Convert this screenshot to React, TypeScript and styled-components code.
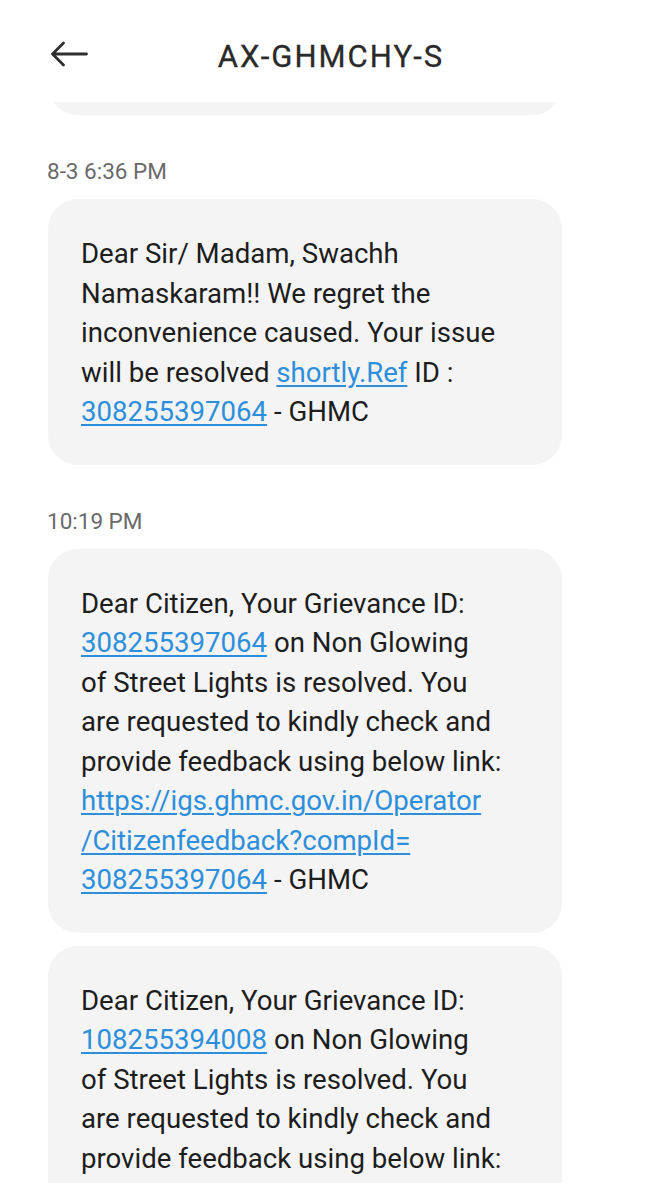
import React from "react";
import styled, { createGlobalStyle } from "styled-components";

type Segment = { text: string; link?: boolean };
type Line = Segment[];

interface Message {
  id: string;
  time?: string;
  lines: Line[];
}

const t = (text: string): Segment => ({ text });
const l = (text: string): Segment => ({ text, link: true });

const messages: Message[] = [
  {
    id: "m1",
    time: "8-3 6:36 PM",
    lines: [
      [t("Dear Sir/ Madam, Swachh")],
      [t("Namaskaram!! We regret the")],
      [t("inconvenience caused. Your issue")],
      [t("will be resolved "), l("shortly.Ref"), t(" ID :")],
      [l("308255397064"), t(" - GHMC")],
    ],
  },
  {
    id: "m2",
    time: "10:19 PM",
    lines: [
      [t("Dear Citizen, Your Grievance ID:")],
      [l("308255397064"), t(" on Non Glowing")],
      [t("of Street Lights is resolved. You")],
      [t("are requested to kindly check and")],
      [t("provide feedback using below link:")],
      [l("https://igs.ghmc.gov.in/Operator")],
      [l("/Citizenfeedback?compId=")],
      [l("308255397064"), t(" - GHMC")],
    ],
  },
  {
    id: "m3",
    lines: [
      [t("Dear Citizen, Your Grievance ID:")],
      [l("108255394008"), t(" on Non Glowing")],
      [t("of Street Lights is resolved. You")],
      [t("are requested to kindly check and")],
      [t("provide feedback using below link:")],
      [l("https://igs.ghmc.gov.in/Operator")],
      [l("/Citizenfeedback?compId=")],
      [l("108255394008"), t(" - GHMC")],
    ],
  },
];

const GlobalStyle = createGlobalStyle`
  html, body {
    margin: 0;
    padding: 0;
    background: #ffffff;
  }
  body {
    font-family: Roboto, "Noto Sans", "Liberation Sans", sans-serif;
    -webkit-font-smoothing: antialiased;
  }
`;

const Screen = styled.div`
  width: 662px;
  height: 1200px;
  background: #ffffff;
  display: flex;
  flex-direction: column;
  overflow: hidden;
`;

const Header = styled.header`
  height: 102px;
  flex-shrink: 0;
  display: grid;
  grid-template-columns: 120px 1fr 120px;
  align-items: center;
  padding-top: 10px;
  box-sizing: border-box;
`;

const BackButton = styled.button`
  border: none;
  background: none;
  padding: 0 0 0 50px;
  margin: 0 0 5px;
  display: flex;
  align-items: center;
  cursor: pointer;
  justify-self: start;
`;

const Title = styled.h1`
  margin: 0;
  text-align: center;
  font-size: 31px;
  font-weight: 400;
  color: #2a2a2a;
  letter-spacing: 2px;
  -webkit-text-stroke: 0.3px #2a2a2a;
`;

const Thread = styled.main`
  flex: 0 0 1081px;
  overflow: hidden;
  display: flex;
  flex-direction: column;
  padding: 0 100px 0 48px;
`;

const Bubble = styled.div`
  flex-shrink: 0;
  width: 514px;
  box-sizing: border-box;
  background: #f4f4f4;
  border-radius: 30px;
  padding: 35px 20px 33px 33px;
  font-size: 27.6px;
  line-height: 39.5px;
  color: #1d1d1d;

  & + & {
    margin-top: 13px;
  }
`;

/* the earlier message, scrolled mostly out of view under the header */
const EarlierBubble = styled(Bubble)`
  height: 120px;
  margin-top: -107px;
`;

const TimeLabel = styled.div`
  margin: 43px 0 15px -1px;
  font-size: 22.5px;
  line-height: 26px;
  color: #6a6a6a;
`;

const TextLine = styled.div`
  white-space: nowrap;
`;

const Link = styled.a`
  color: #2d8fdb;
  text-decoration: underline;
  text-decoration-thickness: 1.5px;
  text-underline-offset: 3px;
`;

const BackArrow = () => (
  <svg width="38" height="26" viewBox="0 0 38 26" fill="none">
    <path
      d="M36.5 13H3M13.5 2L2.5 13L13.5 24"
      stroke="#2e2e2e"
      strokeWidth="2.8"
      strokeLinecap="round"
      strokeLinejoin="round"
    />
  </svg>
);

function MessageBubble({ lines }: { lines: Line[] }) {
  return (
    <Bubble>
      {lines.map((line, i) => (
        <TextLine key={i}>
          {line.map((seg, j) =>
            seg.link ? (
              <Link key={j} href="#">
                {seg.text}
              </Link>
            ) : (
              <span key={j}>{seg.text}</span>
            )
          )}
        </TextLine>
      ))}
    </Bubble>
  );
}

export default function App() {
  return (
    <>
      <GlobalStyle />
      <Screen>
        <Header>
          <BackButton aria-label="Back">
            <BackArrow />
          </BackButton>
          <Title>AX-GHMCHY-S</Title>
          <span />
        </Header>
        <Thread>
          <EarlierBubble />
          {messages.map((m) => (
            <React.Fragment key={m.id}>
              {m.time && <TimeLabel>{m.time}</TimeLabel>}
              <MessageBubble lines={m.lines} />
            </React.Fragment>
          ))}
        </Thread>
      </Screen>
    </>
  );
}
